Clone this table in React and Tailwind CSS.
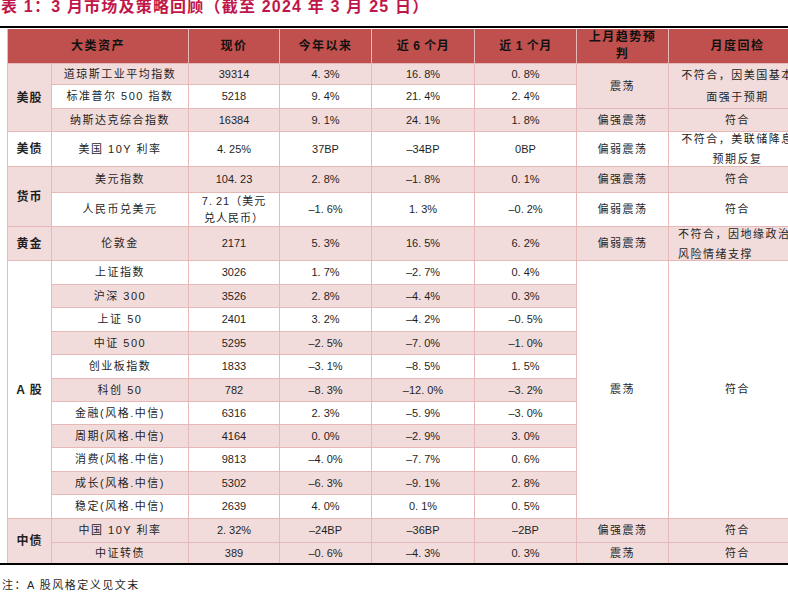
import React from 'react';
import clsx from 'clsx';

const FONT = { fontFamily: '"Liberation Sans", "Noto Sans CJK SC", sans-serif' };

// numbers in the source have a wide gap after the decimal point
const Num = ({ v }) => {
  const parts = v.split('.');
  if (parts.length === 1) return <>{v}</>;
  return (
    <>
      {parts[0]}
      <span className="mr-[3px]">.</span>
      {parts[1]}
    </>
  );
};

const Cell = ({ children, pink, className }) => (
  <div
    className={clsx(
      'flex items-center justify-center text-center text-[11px] text-[#1f1f1f]',
      pink ? 'bg-[#F2DCDB]' : 'bg-white',
      className
    )}
  >
    {children}
  </div>
);

const Head = ({ children, className }) => (
  <div
    className={clsx(
      'flex items-center justify-center text-center bg-[#C0504D] text-[12px] font-bold tracking-[0.5px] text-[#111]',
      className
    )}
  >
    {children}
  </div>
);

const Row = ({ name, price, ytd, m6, m1, pink }) => (
  <>
    <Cell pink={pink} className="tracking-[1.5px]">{name}</Cell>
    <Cell pink={pink}>{typeof price === 'string' ? <Num v={price} /> : price}</Cell>
    <Cell pink={pink}><Num v={ytd} /></Cell>
    <Cell pink={pink}><Num v={m6} /></Cell>
    <Cell pink={pink}><Num v={m1} /></Cell>
  </>
);

const aShares = [
  ['上证指数', '3026', '1.7%', '–2.7%', '0.4%'],
  ['沪深 300', '3526', '2.8%', '–4.4%', '0.3%'],
  ['上证 50', '2401', '3.2%', '–4.2%', '–0.5%'],
  ['中证 500', '5295', '–2.5%', '–7.0%', '–1.0%'],
  ['创业板指数', '1833', '–3.1%', '–8.5%', '1.5%'],
  ['科创 50', '782', '–8.3%', '–12.0%', '–3.2%'],
  ['金融(风格.中信)', '6316', '2.3%', '–5.9%', '–3.0%'],
  ['周期(风格.中信)', '4164', '0.0%', '–2.9%', '3.0%'],
  ['消费(风格.中信)', '9813', '–4.0%', '–7.7%', '0.6%'],
  ['成长(风格.中信)', '5302', '–6.3%', '–9.1%', '2.8%'],
  ['稳定(风格.中信)', '2639', '4.0%', '0.1%', '0.5%'],
];

export default function App() {
  return (
    <div className="w-[788px] h-[600px] overflow-hidden bg-white" style={FONT}>
      <div className="h-[26px] pl-[1px] text-[16px] leading-[14px] font-bold tracking-[1.2px] text-[#C0174A] whitespace-nowrap">
        表 1：3 月市场及策略回顾（截至 2024 年 3 月 25 日）
      </div>
      <div className="h-[2px] bg-black" />
      <div className="h-px bg-white" />

      <div className="ml-[7px] w-[799px] grid grid-cols-[43px_136px_90px_91px_102px_101px_91px_137px] grid-rows-[34px_20px_23px_22px_34px_25px_33px_33px_23px_22px_23px_22px_23px_22px_22px_22px_23px_22px_23px_23px_20px] gap-px pl-px bg-[#E6B8B7]">
        <Head className="col-span-2 tracking-[1.5px]">大类资产</Head>
        <Head className="tracking-[1.5px]">现价</Head>
        <Head className="tracking-[1.5px]">今年以来</Head>
        <Head>近 6 个月</Head>
        <Head>近 1 个月</Head>
        <Head className="leading-[17px] tracking-[1.5px]">上月趋势预<br />判</Head>
        <Head className="tracking-[1.5px]">月度回检</Head>

        {/* 美股 */}
        <Cell pink className="row-span-3 font-bold text-[12px] tracking-[1px]">美股</Cell>
        <Row pink name="道琼斯工业平均指数" price="39314" ytd="4.3%" m6="16.8%" m1="0.8%" />
        <Cell pink className="row-span-2 tracking-[1.5px]">震荡</Cell>
        <Cell pink className="row-span-2 tracking-[1.5px] leading-[22px] whitespace-nowrap">不符合，因美国基本<br />面强于预期</Cell>
        <Row name="标准普尔 500 指数" price="5218" ytd="9.4%" m6="21.4%" m1="2.4%" />
        <Row pink name="纳斯达克综合指数" price="16384" ytd="9.1%" m6="24.1%" m1="1.8%" />
        <Cell pink className="tracking-[1.5px]">偏强震荡</Cell>
        <Cell pink className="tracking-[1.5px]">符合</Cell>

        {/* 美债 */}
        <Cell className="font-bold text-[12px] tracking-[1px]">美债</Cell>
        <Row name="美国 10Y 利率" price="4.25%" ytd="37BP" m6="–34BP" m1="0BP" />
        <Cell className="tracking-[1.5px]">偏弱震荡</Cell>
        <Cell className="tracking-[1.5px] leading-[20px] whitespace-nowrap">不符合，美联储降息<br />预期反复</Cell>

        {/* 货币 */}
        <Cell pink className="row-span-2 font-bold text-[12px] tracking-[1px]">货币</Cell>
        <Row pink name="美元指数" price="104.23" ytd="2.8%" m6="–1.8%" m1="0.1%" />
        <Cell pink className="tracking-[1.5px]">偏强震荡</Cell>
        <Cell pink className="tracking-[1.5px]">符合</Cell>
        <Row
          name="人民币兑美元"
          price={<span className="leading-[17px] tracking-[1px]">7<span className="mr-[3px]">.</span>21（美元<br />兑人民币）</span>}
          ytd="–1.6%"
          m6="1.3%"
          m1="–0.2%"
        />
        <Cell className="tracking-[1.5px]">偏弱震荡</Cell>
        <Cell className="tracking-[1.5px]">符合</Cell>

        {/* 黄金 */}
        <Cell pink className="font-bold text-[12px] tracking-[1px]">黄金</Cell>
        <Row pink name="伦敦金" price="2171" ytd="5.3%" m6="16.5%" m1="6.2%" />
        <Cell pink className="tracking-[1.5px]">偏弱震荡</Cell>
        <Cell pink className="justify-start text-left pl-[9px] tracking-[1.5px] leading-[20px] whitespace-nowrap">
          <span>不符合，因地缘政治<br />风险情绪支撑</span>
        </Cell>

        {/* A股 */}
        <Cell className="row-span-11 font-bold text-[12px] tracking-[1px]">A 股</Cell>
        {aShares.map(([name, price, ytd, m6, m1], i) => (
          <React.Fragment key={name}>
            <Row pink={i % 2 === 1} name={name} price={price} ytd={ytd} m6={m6} m1={m1} />
            {i === 0 && (
              <>
                <Cell className="row-span-11 tracking-[1.5px]">震荡</Cell>
                <Cell className="row-span-11 tracking-[1.5px]">符合</Cell>
              </>
            )}
          </React.Fragment>
        ))}

        {/* 中债 */}
        <Cell pink className="row-span-2 font-bold text-[12px] tracking-[1px]">中债</Cell>
        <Row pink name="中国 10Y 利率" price="2.32%" ytd="–24BP" m6="–36BP" m1="–2BP" />
        <Cell pink className="tracking-[1.5px]">偏强震荡</Cell>
        <Cell pink className="tracking-[1.5px]">符合</Cell>
        <Row pink name="中证转债" price="389" ytd="–0.6%" m6="–4.3%" m1="0.3%" />
        <Cell pink className="tracking-[1.5px]">震荡</Cell>
        <Cell pink className="tracking-[1.5px]">符合</Cell>
      </div>

      <div className="h-[2px] bg-black" />
      <div className="pt-[13px] pl-[2px] text-[11px] leading-[14px] tracking-[1.5px] text-[#1f1f1f]">
        注：A 股风格定义见文末
      </div>
    </div>
  );
}
